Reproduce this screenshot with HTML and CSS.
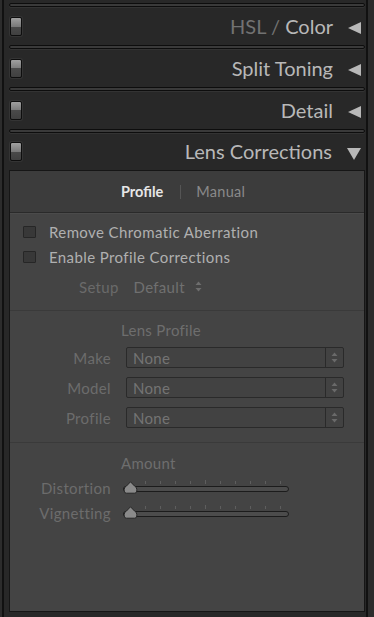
FILE: index.html
```html
<!DOCTYPE html>
<html>
<head>
<meta charset="utf-8">
<link rel="stylesheet" href="styles.css">
</head>
<body>
<div class="col">
  <div class="sep"></div>
  <div class="hdr"><span class="sw"></span><span class="title"><span class="dim">HSL / </span>Color</span><span class="tri-l"></span></div>
  <div class="sep"></div>
  <div class="hdr"><span class="sw"></span><span class="title">Split Toning</span><span class="tri-l"></span></div>
  <div class="sep"></div>
  <div class="hdr"><span class="sw"></span><span class="title">Detail</span><span class="tri-l"></span></div>
  <div class="sep"></div>
  <div class="hdr open"><span class="sw"></span><span class="title">Lens Corrections</span><span class="tri-d"></span></div>
  <div class="panel">
    <div class="tabs"><span class="tab on">Profile</span><span class="bar"></span><span class="tab">Manual</span></div>
    <div class="checks">
      <div class="chk"><span class="box"></span>Remove Chromatic Aberration</div>
      <div class="chk"><span class="box"></span>Enable Profile Corrections</div>
      <div class="setup"><span>Setup</span><span class="def">Default</span><svg class="ud" width="7" height="11" viewBox="0 0 7 11"><path d="M3.5 0.5 L6.5 4 L0.5 4 Z M0.5 7 L6.5 7 L3.5 10.5 Z" fill="#6e6e6e"/></svg></div>
    </div>
    <div class="lens">
      <div class="sub">Lens Profile</div>
      <div class="row"><span class="lbl">Make</span><div class="sel"><span class="val">None</span><span class="arr"><svg width="7" height="11" viewBox="0 0 7 11"><path d="M3.5 0.5 L6.5 4 L0.5 4 Z M0.5 7 L6.5 7 L3.5 10.5 Z" fill="#6a6a6a"/></svg></span></div></div>
      <div class="row"><span class="lbl">Model</span><div class="sel"><span class="val">None</span><span class="arr"><svg width="7" height="11" viewBox="0 0 7 11"><path d="M3.5 0.5 L6.5 4 L0.5 4 Z M0.5 7 L6.5 7 L3.5 10.5 Z" fill="#6a6a6a"/></svg></span></div></div>
      <div class="row"><span class="lbl">Profile</span><div class="sel"><span class="val">None</span><span class="arr"><svg width="7" height="11" viewBox="0 0 7 11"><path d="M3.5 0.5 L6.5 4 L0.5 4 Z M0.5 7 L6.5 7 L3.5 10.5 Z" fill="#6a6a6a"/></svg></span></div></div>
    </div>
    <div class="amount">
      <div class="sub">Amount</div>
      <div class="srow"><span class="lbl">Distortion</span>
        <div class="slider">
          <div class="ticks"><i></i><i></i><i></i><i></i><i class="mid"></i><i></i><i></i><i></i><i></i><i></i></div>
          <div class="track"></div>
          <svg class="thumb" width="15" height="13" viewBox="0 0 15 13"><path d="M7.5 0.8 L11.5 5 Q13.8 6 13.8 8.5 L13.8 10 Q13.8 12.2 11.5 12.2 L3.5 12.2 Q1.2 12.2 1.2 10 L1.2 8.5 Q1.2 6 3.5 5 Z" fill="#8a8a8a" stroke="#262626" stroke-width="1"/></svg>
        </div>
      </div>
      <div class="srow"><span class="lbl">Vignetting</span>
        <div class="slider">
          <div class="ticks"><i></i><i></i><i></i><i></i><i class="mid"></i><i></i><i></i><i></i><i></i><i></i></div>
          <div class="track"></div>
          <svg class="thumb" width="15" height="13" viewBox="0 0 15 13"><path d="M7.5 0.8 L11.5 5 Q13.8 6 13.8 8.5 L13.8 10 Q13.8 12.2 11.5 12.2 L3.5 12.2 Q1.2 12.2 1.2 10 L1.2 8.5 Q1.2 6 3.5 5 Z" fill="#8a8a8a" stroke="#262626" stroke-width="1"/></svg>
        </div>
      </div>
    </div>
  </div>
</div>
</body>
</html>
```

FILE: styles.css
```css
* { box-sizing: border-box; }
html, body { margin: 0; padding: 0; }
body {
  background: #2c2c2c;
  width: 374px;
  height: 617px;
  overflow: hidden;
  font-family: Lato, "Open Sans", sans-serif;
}
.col {
  margin: 0 6px 0 2px;
  border-left: 2px solid #111;
  border-right: 2px solid #111;
  background: #282828;
  height: 617px;
  padding-top: 3px;
  display: flex;
  flex-direction: column;
}
.sep {
  flex: none;
  height: 4px;
  margin: 0 1px 0 5px;
  border: 1px solid #0d0d0d;
  border-radius: 2px;
  background: #3a3a3a;
  box-shadow: 0 1px 0 #333;
}
.hdr {
  flex: none;
  height: 38px;
  display: flex;
  align-items: center;
  padding: 0 5px 0 6px;
}
.hdr.open { height: 37px; }
.sw {
  width: 12px;
  height: 19px;
  border: 1px solid #0e0e0e;
  border-radius: 2px;
  background: linear-gradient(#a0a0a0, #7a7a7a 50%, #4a4a4a 50%, #404040);
  box-shadow: 0 0 0 1px #343434;
}
.title {
  margin-left: auto;
  margin-right: 15px;
  font-size: 20px;
  color: #b8b8b8;
  margin-top: -1px;
}
.dim { color: #727272; }
.tri-l {
  width: 0;
  height: 0;
  border-top: 6px solid transparent;
  border-bottom: 6px solid transparent;
  border-right: 13px solid #b8b8b8;
  margin-top: 4px;
}
.tri-d {
  width: 0;
  height: 0;
  border-left: 7px solid transparent;
  border-right: 7px solid transparent;
  border-top: 12px solid #b8b8b8;
  margin-top: 4px;
}
.panel {
  flex: 1;
  margin: 0 1px 5px 5px;
  border: 1px solid #161616;
  background: #444;
  display: flex;
  flex-direction: column;
}
.tabs {
  height: 42px;
  background: #3c3c3c;
  border-bottom: 1px solid #2a2a2a;
  box-shadow: 0 1px 0 #4b4b4b;
  display: flex;
  align-items: center;
  padding-left: 111px;
  font-size: 14.5px;
  letter-spacing: 0.3px;
  color: #8a8a8a;
}
.tab.on { color: #e6e6e6; font-weight: bold; letter-spacing: 0; }
.bar { width: 1px; height: 14px; background: #555; margin: 0 15px 0 17px; }
.checks { padding: 6px 0 11px 13px; }
.chk {
  display: flex;
  align-items: center;
  height: 25px;
  font-size: 15px;
  letter-spacing: 0.4px;
  color: #b0b0b0;
}
.box {
  width: 13px;
  height: 12px;
  border: 1px solid #262626;
  background: #383838;
  border-radius: 1px;
  margin-right: 13px;
}
.setup {
  height: 25px;
  margin-top: 5px;
  display: flex;
  align-items: center;
  padding-left: 56px;
  font-size: 15px;
  letter-spacing: 0.3px;
  color: #6a6a6a;
}
.def { margin-left: 15px; color: #707070; }
.ud { margin-left: 10px; }
.lens {
  border-top: 1px solid #3a3a3a;
  padding: 9px 0 5px;
}
.sub {
  padding-left: 111px;
  height: 20px;
  line-height: 20px;
  font-size: 15px;
  letter-spacing: 0.3px;
  color: #6e6e6e;
}
.lens .sub { margin-bottom: 7px; }
.row {
  display: grid;
  grid-template-columns: 101px 218px;
  column-gap: 15px;
  align-items: center;
  height: 21px;
  margin-bottom: 9px;
}
.lbl {
  text-align: right;
  font-size: 15px;
  letter-spacing: 0.35px;
  color: #6c6c6c;
}
.sel {
  height: 21px;
  border: 1px solid #2a2a2a;
  border-radius: 2px;
  background: #424242;
  display: flex;
  align-items: center;
}
.val { flex: 1; padding-left: 6px; font-size: 15px; letter-spacing: 0.3px; color: #747474; }
.arr {
  width: 18px;
  height: 100%;
  border-left: 1px solid #2a2a2a;
  display: flex;
  align-items: center;
  justify-content: center;
}
.amount {
  border-top: 1px solid #3a3a3a;
  padding-top: 10px;
}
.amount .sub { margin-bottom: 2px; }
.srow {
  display: grid;
  grid-template-columns: 101px 166px;
  column-gap: 12px;
  align-items: center;
  height: 25px;
}
.slider { position: relative; height: 13px; }
.ticks { display: flex; gap: 14px; padding-left: 22px; height: 4px; align-items: flex-start; }
.ticks i { width: 1px; height: 3px; background: #5e5e5e; }
.ticks i.mid { height: 4px; margin-top: -1px; }
.track {
  margin-top: 1px;
  height: 6px;
  border: 1px solid #1c1c1c;
  border-radius: 3px;
  background: #4c4c4c;
}
.thumb { position: absolute; left: 0; top: 0; }
```
